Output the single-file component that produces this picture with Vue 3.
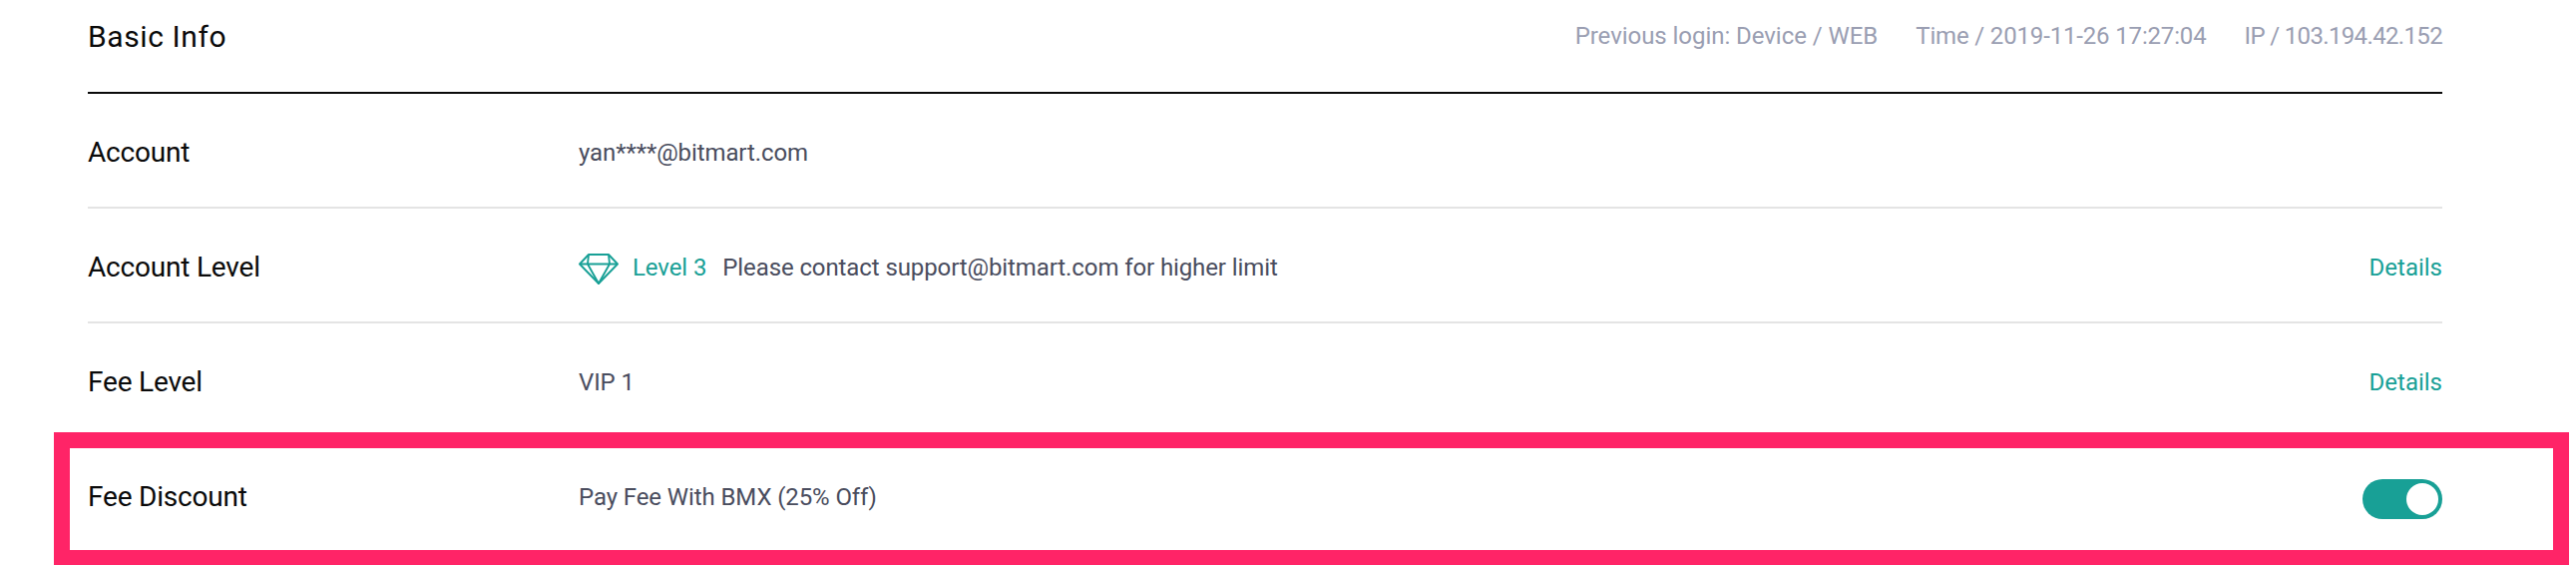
<script setup>
const rows = [
  { label: 'Account', kind: 'plain', value: 'yan****@bitmart.com' },
  { label: 'Account Level', kind: 'level', value: 'Please contact support@bitmart.com for higher limit', link: 'Details' },
  { label: 'Fee Level', kind: 'plain', value: 'VIP 1', link: 'Details' },
  { label: 'Fee Discount', kind: 'toggle', value: 'Pay Fee With BMX (25% Off)' }
]
</script>

<template>
  <div class="page">
    <header class="head">
      <h2 class="title">Basic Info</h2>
      <div class="meta">
        <span>Previous login: Device / WEB</span>
        <span class="time">Time / 2019-11-26 17:27:04</span>
        <span class="ip">IP / 103.194.42.152</span>
      </div>
    </header>
    <div v-for="row in rows" :key="row.label" class="row">
      <div class="label">{{ row.label }}</div>
      <div class="value">
        <template v-if="row.kind === 'level'">
          <svg class="gem" viewBox="0 0 40 31" fill="none" stroke="#18a096" stroke-width="1.9" stroke-linejoin="round">
            <path d="M10 1H30L39 10.5L20 30L1 10.5Z" />
            <path d="M1 10.5H39M10 1L9 10.5L20 30L31 10.5L30 1" />
          </svg>
          <span class="level">Level 3</span>
        </template>
        <span>{{ row.value }}</span>
      </div>
      <a v-if="row.link" class="link">{{ row.link }}</a>
      <div v-if="row.kind === 'toggle'" class="toggle"><span class="knob"></span></div>
    </div>
    <div class="highlight"></div>
  </div>
</template>

<style>
html, body { background: #fff; overflow: hidden; }
</style>

<style scoped>
.page {
  position: relative;
  box-sizing: border-box;
  width: 2582px;
  height: 566px;
  overflow: hidden;
  padding: 0 134px 0 88px;
  font-family: Roboto, "Liberation Sans", sans-serif;
  background: #fff;
}
.head {
  height: 92px;
  display: flex;
  justify-content: space-between;
  border-bottom: 2px solid #0a0a0a;
}
.title {
  margin: 0;
  padding-top: 18px;
  font-size: 30px;
  line-height: 38px;
  letter-spacing: 0.6px;
  font-weight: 400;
  color: #0a0a0a;
}
.meta {
  display: flex;
  gap: 38px;
  padding-top: 20px;
  font-size: 24px;
  line-height: 32px;
  letter-spacing: -0.05px;
  color: #9a9eb2;
}
.time {
  letter-spacing: -0.16px;
}
.ip {
  letter-spacing: -0.65px;
}
.row {
  box-sizing: content-box;
  height: 109px;
  padding-top: 4px;
  display: flex;
  align-items: center;
  border-bottom: 2px solid #e4e4e4;
}
.label {
  width: 492px;
  flex: none;
  font-size: 28px;
  letter-spacing: -0.2px;
  color: #0a0a0a;
}
.value {
  flex: 1;
  display: flex;
  align-items: center;
  font-size: 24px;
  letter-spacing: -0.1px;
  color: #4a4d5e;
}
.gem {
  width: 40px;
  height: 31px;
  margin-top: 4px;
  margin-right: 14px;
}
.level {
  color: #18a096;
  margin-right: 16px;
}
.link {
  font-size: 24px;
  color: #18a096;
}
.toggle {
  box-sizing: border-box;
  width: 80px;
  height: 40px;
  margin-top: 5px;
  padding: 4px;
  border-radius: 20px;
  background: #18a096;
  display: flex;
  justify-content: flex-end;
}
.knob {
  width: 32px;
  height: 32px;
  border-radius: 50%;
  background: #fff;
}
.highlight {
  position: absolute;
  left: 54px;
  top: 433px;
  width: 2521px;
  height: 134px;
  box-sizing: border-box;
  border: 16px solid #ff2467;
}
</style>
